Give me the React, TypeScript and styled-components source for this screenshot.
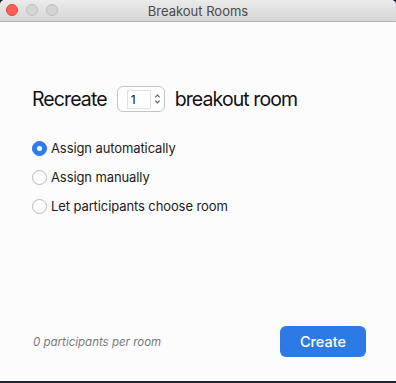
import React from "react";
import styled, { createGlobalStyle } from "styled-components";

const GlobalStyle = createGlobalStyle`
  html, body {
    margin: 0;
    padding: 0;
    background: #1c2231;
  }
  body {
    font-family: Inter, "Helvetica Neue", Arial, sans-serif;
    -webkit-font-smoothing: antialiased;
  }
`;

const Window = styled.div`
  width: 396px;
  height: 381px;
  display: flex;
  flex-direction: column;
  background: #fcfcfd;
  border-radius: 5px 5px 0 0;
  overflow: hidden;
`;

const TitleBar = styled.div`
  position: relative;
  height: 21px;
  flex-shrink: 0;
  display: flex;
  align-items: center;
  justify-content: center;
  background: linear-gradient(#ebebeb, #d6d6d6);
  border-bottom: 1px solid #b4b4b4;
`;

const Lights = styled.div`
  position: absolute;
  left: 6px;
  top: 4px;
  display: flex;
  gap: 8px;
`;

const Light = styled.span<{ $color: string; $ring: string }>`
  width: 12px;
  height: 12px;
  border-radius: 50%;
  box-sizing: border-box;
  background: ${(p) => p.$color};
  border: 1px solid ${(p) => p.$ring};
`;

const Title = styled.div`
  font-size: 13px;
  color: #4a4a4a;
`;

const Body = styled.div`
  flex: 1;
  display: flex;
  flex-direction: column;
  padding: 64px 30px 24px 32px;
`;

const Heading = styled.div`
  display: flex;
  align-items: center;
  gap: 10px;
  font-size: 19.5px;
  letter-spacing: -0.9px;
  color: #111;
  height: 26px;
`;

const Spin = styled.div`
  box-sizing: border-box;
  width: 48px;
  height: 26px;
  border: 1px solid #c4c4c8;
  border-radius: 6px;
  background: #fff;
  display: flex;
  align-items: center;
  padding: 0 3px 0 9px;
  gap: 3px;
  letter-spacing: 0;
`;

const SpinField = styled.div`
  box-sizing: border-box;
  width: 27px;
  height: 19px;
  border: 1px solid #e2e2e4;
  font-size: 12px;
  line-height: 18px;
  padding-left: 3px;
  color: #111;
`;

const Options = styled.div`
  margin-top: 26px;
  display: flex;
  flex-direction: column;
  gap: 9px;
`;

const Option = styled.label`
  display: flex;
  align-items: center;
  gap: 4px;
  height: 20px;
  font-size: 13px;
  letter-spacing: -0.1px;
  color: #1b1b1b;
`;

const Radio = styled.span<{ $on?: boolean }>`
  box-sizing: border-box;
  width: 15px;
  height: 15px;
  border-radius: 50%;
  display: flex;
  align-items: center;
  justify-content: center;
  background: ${(p) => (p.$on ? "#2f7cf0" : "#fff")};
  border: 1px solid ${(p) => (p.$on ? "#2a72e0" : "#b8b8bc")};
  &::after {
    content: "";
    display: ${(p) => (p.$on ? "block" : "none")};
    width: 5px;
    height: 5px;
    border-radius: 50%;
    background: #fff;
  }
`;

const Footer = styled.div`
  margin-top: auto;
  display: flex;
  align-items: center;
  justify-content: space-between;
`;

const Note = styled.div`
  font-size: 11.5px;
  font-style: italic;
  color: #7a7a7e;
  margin-left: 1px;
`;

const CreateButton = styled.button`
  width: 86px;
  height: 31px;
  border: none;
  border-radius: 6px;
  background: #2d7ae6;
  color: #fff;
  font-family: inherit;
  font-size: 14.5px;
  font-weight: 500;
`;

const App: React.FC = () => {
  const options = [
    "Assign automatically",
    "Assign manually",
    "Let participants choose room",
  ];

  return (
    <>
      <GlobalStyle />
      <Window>
        <TitleBar>
          <Lights>
            <Light $color="#fc5d55" $ring="#e0463e" />
            <Light $color="#d4d4d6" $ring="#bdbdbf" />
            <Light $color="#d4d4d6" $ring="#bdbdbf" />
          </Lights>
          <Title>Breakout Rooms</Title>
        </TitleBar>
        <Body>
          <Heading>
            Recreate
            <Spin>
              <SpinField>1</SpinField>
              <svg width="8" height="14" viewBox="0 0 8 14">
                <path
                  d="M1.5 5 L4 2.5 L6.5 5 M1.5 9 L4 11.5 L6.5 9"
                  fill="none"
                  stroke="#555"
                  strokeWidth="1.2"
                />
              </svg>
            </Spin>
            breakout room
          </Heading>
          <Options>
            {options.map((label, i) => (
              <Option key={label}>
                <Radio $on={i === 0} />
                {label}
              </Option>
            ))}
          </Options>
          <Footer>
            <Note>0 participants per room</Note>
            <CreateButton>Create</CreateButton>
          </Footer>
        </Body>
      </Window>
    </>
  );
};

export default App;
